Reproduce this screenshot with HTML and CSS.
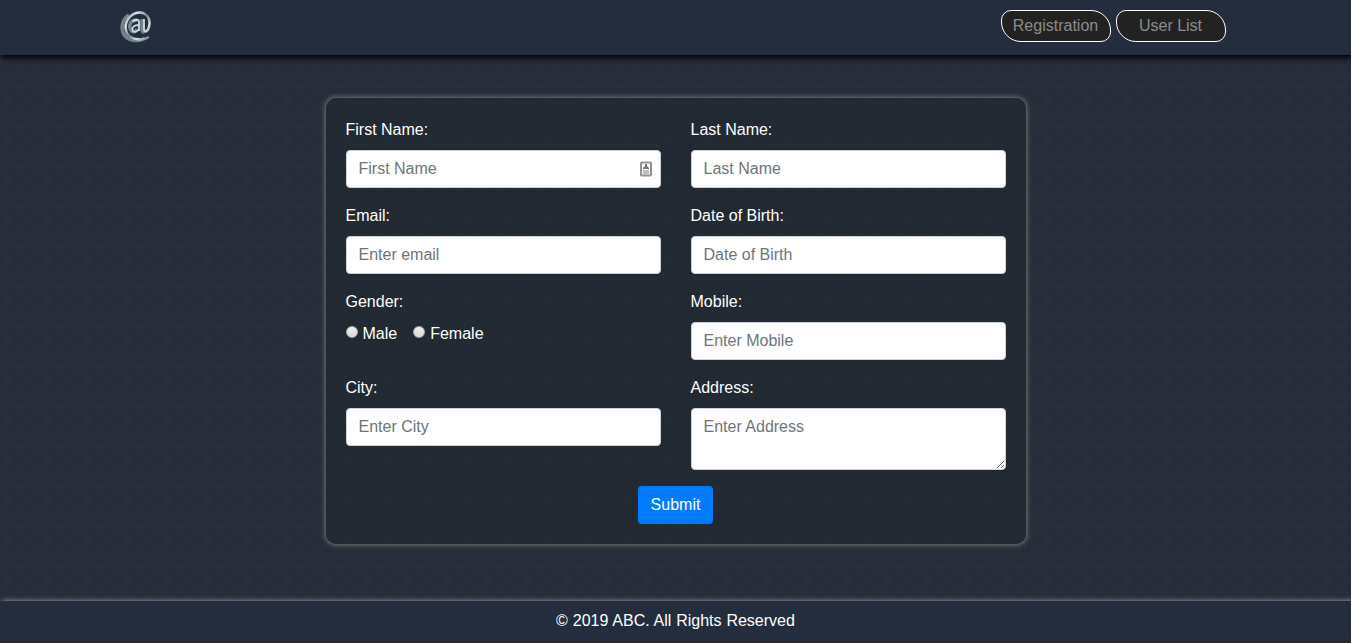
FILE: index.html
```html
<!DOCTYPE html>
<html lang="en">
<head>
<meta charset="utf-8">
<title>Registration</title>
<link rel="stylesheet" href="styles.css">
</head>
<body>
<div class="page">
  <svg class="scales" aria-hidden="true">
    <defs>
      <pattern id="scale" width="20" height="20" patternUnits="userSpaceOnUse" x="-1" y="7.5">
        <g fill="none" stroke="#25303e" stroke-width="2">
          <path d="M0 -.5C2 13 18 13 20 -.5M-10 9.5C-8 23 8 23 10 9.5C12 23 28 23 30 9.5M-10 -10.5C-8 3 8 3 10 -10.5C12 3 28 3 30 -10.5M0 19.5C2 33 18 33 20 19.5"/>
        </g>
      </pattern>
    </defs>
    <rect width="100%" height="100%" fill="url(#scale)"/>
  </svg>
  <header class="topbar">
    <svg class="logo" viewBox="0 0 36 36" aria-label="ABC">
      <defs>
        <linearGradient id="metal" x1="0" y1="0" x2="1" y2="1">
          <stop offset="0" stop-color="#71858d"/><stop offset=".25" stop-color="#dbe6e8"/>
          <stop offset=".5" stop-color="#71858e"/><stop offset=".72" stop-color="#d4e1e4"/><stop offset="1" stop-color="#62757d"/>
        </linearGradient>
      </defs>
      <g fill="none">
        <path d="M27 30C22 34 12 33 8 29C2 23 3 12 11 7" stroke="#71848c" stroke-width="3.5"/>
        <path d="M31 29C25 33 14 32 9.500 26C5 18 9 8 18 5C26 3 31.500 8 31.500 15C31.500 21 29 24 25 24" stroke="url(#metal)" stroke-width="2.500"/>
        <path d="M19 12C13 12 11 16 12 20C13 25 17 25 19 21M24 11V22C24 25 27 24 28 22" stroke="#71858e" stroke-width="3.500"/>
        <path d="M15 14C16 11 21 11 21 14V23M21 17C16 17 14 19 14.500 22C15 25 20 24 21 21M26 11V22C26 24 28 24 29 22" stroke="#cfdcdf" stroke-width="1.800"/>
      </g>
    </svg>
    <nav class="links"><a class="pill">Registration</a><a class="pill">User List</a></nav>
  </header>
  <main class="content">
    <form class="card">
      <div class="field"><label>First Name:</label>
        <div class="control"><input type="text" placeholder="First Name">
          <svg class="contact" viewBox="0 0 12 16"><rect x="1" y="1.500" width="10" height="13" rx=".7" fill="#fff" stroke="#929292" stroke-width="2"/><path d="M5 3H7V5L9 7V8H3V7L5 5Z" fill="#777"/><path d="M3 10H9M3 12H9" stroke="#aaa" stroke-width="1.300"/></svg>
        </div></div>
      <div class="field"><label>Last Name:</label><input type="text" placeholder="Last Name"></div>
      <div class="field"><label>Email:</label><input type="text" placeholder="Enter email"></div>
      <div class="field"><label>Date of Birth:</label><input type="text" placeholder="Date of Birth"></div>
      <div class="field"><label>Gender:</label>
        <div class="choices"><span class="choice"><i class="dot"></i>Male</span><span class="choice"><i class="dot"></i>Female</span></div></div>
      <div class="field"><label>Mobile:</label><input type="text" placeholder="Enter Mobile"></div>
      <div class="field"><label>City:</label><input type="text" placeholder="Enter City"></div>
      <div class="field"><label>Address:</label><textarea placeholder="Enter Address"></textarea></div>
      <button class="submit" type="button">Submit</button>
    </form>
  </main>
  <footer class="footer">© 2019 ABC. All Rights Reserved</footer>
</div>
</body>
</html>
```
FILE: styles.css
```css
* { box-sizing: border-box; }
html { background: #fff; }
body {
  margin: 0;
  overflow: hidden;
  font: 16px/24px "Liberation Sans", Arial, sans-serif;
  color: #fff;
}
.page {
  position: relative;
  width: 1351px;
  height: 643px;
  display: flex;
  flex-direction: column;
  overflow: hidden;
  background: #282c38;
}
.scales { position: absolute; inset: 0; width: 100%; height: 100%; }
.topbar {
  position: relative;
  flex: 0 0 55px;
  display: flex;
  justify-content: space-between;
  align-items: flex-start;
  padding: 8px 125.5px 0 118px;
  background: #242d3e;
  box-shadow: 2px 2px 6px 1px #000;
}
.logo { width: 36px; height: 36px; }
.links { display: flex; gap: 5px; padding-top: 2px; }
.pill {
  width: 110px;
  height: 32px;
  border: 1px solid #fff;
  border-radius: 10px 20px;
  background: #222;
  color: #8c8c8c;
  line-height: 30px;
  text-align: center;
}
.content { position: relative; flex: 1; padding-top: 43px; }
.card {
  display: grid;
  grid-template-columns: 315px 315px;
  column-gap: 30px;
  align-content: start;
  width: 700px;
  height: 446px;
  margin-left: 325.5px;
  padding: 20px 20px 0;
  border-radius: 10px;
  background: rgba(32, 40, 46, .6);
  box-shadow: 0 0 5px 1px #777;
}
.field { height: 86px; }
.field:nth-of-type(n+7) { height: 98px; }
.field > label { display: block; height: 32px; }
.control { position: relative; }
input, textarea {
  display: block;
  width: 100%;
  height: 38px;
  padding: 6px 12px;
  border: 1px solid #ced4da;
  border-radius: 4px;
  background: #fff;
  font: inherit;
  outline: 0;
}
textarea { height: 62px; resize: vertical; }
::placeholder { color: #6c757d; opacity: 1; }
.contact { position: absolute; right: 8.5px; top: 11px; width: 12px; height: 16px; }
.choices { display: flex; gap: 16px; }
.choice { display: flex; gap: 5px; }
.dot {
  width: 12px;
  height: 12px;
  margin-top: 4px;
  border: 1px solid #aaa;
  border-radius: 50%;
  background: linear-gradient(#eee, #d9d9d9);
}
.submit {
  grid-column: 1 / 3;
  justify-self: center;
  width: 75px;
  height: 38px;
  margin: 12px 0 0;
  padding: 0;
  border: 0;
  border-radius: 4px;
  background: #007bff;
  color: #fff;
  font: inherit;
}
.footer {
  position: relative;
  flex: 0 0 42px;
  height: 42px;
  padding-top: 8px;
  text-align: center;
  word-spacing: .4px;
  background: #242d3e;
  border-bottom: 2px solid #272727;
  box-shadow: 2px 0 5px 0 #aaa;
}
```
